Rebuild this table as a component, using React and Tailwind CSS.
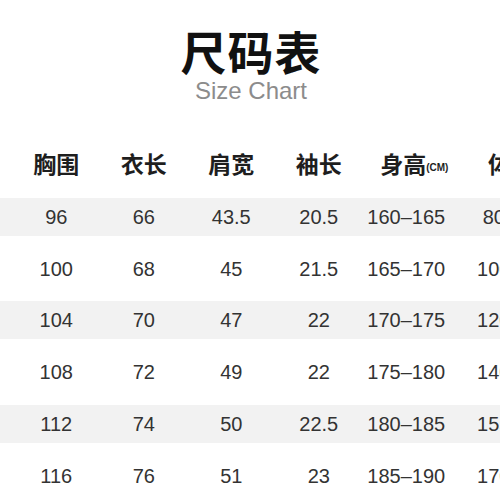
const headers = ["胸围", "衣长", "肩宽", "袖长"];
const rows = [
  ["96", "66", "43.5", "20.5", "160–165", "80"],
  ["100", "68", "45", "21.5", "165–170", "100"],
  ["104", "70", "47", "22", "170–175", "120"],
  ["108", "72", "49", "22", "175–180", "140"],
  ["112", "74", "50", "22.5", "180–185", "155"],
  ["116", "76", "51", "23", "185–190", "170"],
];

export default function App() {
  return (
    <div
      className="w-[500px] h-[500px] overflow-hidden bg-white"
      style={{ fontFamily: '"Liberation Sans", "Noto Sans CJK SC", sans-serif' }}
    >
      <div className="flex flex-col items-center pt-[27px]">
        <div
          className="text-[46px] leading-none font-bold text-[#111] tracking-[1px] ml-[2px]"
          style={{ fontFamily: '"Noto Sans CJK SC", sans-serif' }}
        >
          尺码表
        </div>
        <div className="mt-[6px] text-[24px] leading-none text-[#8c8c8c] ml-[2px]">
          Size Chart
        </div>
      </div>

      <div
        className="mt-[38px] h-[44px] grid grid-cols-[repeat(6,87.5px)] pl-[12.5px] items-center text-[#1e1e1e]"
        style={{ fontFamily: '"Noto Sans CJK SC", sans-serif' }}
      >
        {headers.map((h) => (
          <div key={h} className="flex justify-center text-[23px] font-bold leading-none">
            {h}
          </div>
        ))}
        <div className="flex justify-center items-end pl-[16px] leading-none">
          <span className="text-[23px] font-bold">身高</span>
          <span
            className="text-[10px] font-bold mb-[2px]"
            style={{ fontFamily: '"Liberation Sans", sans-serif' }}
          >
            (CM)
          </span>
        </div>
        <div className="flex justify-start items-end pl-[38px] leading-none whitespace-nowrap">
          <span className="text-[23px] font-bold">体重</span>
          <span
            className="text-[10px] font-bold mb-[2px]"
            style={{ fontFamily: '"Liberation Sans", sans-serif' }}
          >
            (斤)
          </span>
        </div>
      </div>

      <div className="mt-[6px] flex flex-col">
        {rows.map((r, i) => (
          <div key={i} className="h-[51.75px] flex items-center">
            <div
              className={
                "w-full h-[38px] grid grid-cols-[repeat(6,87.5px)] pl-[12.5px] items-center text-[20px] text-[#333] " +
                (i % 2 === 0 ? "bg-[#f2f2f2]" : "bg-white")
              }
            >
              {r.map((c, j) => (
                <div key={j} className="flex justify-center whitespace-nowrap">
                  {c}
                </div>
              ))}
            </div>
          </div>
        ))}
      </div>
    </div>
  );
}
